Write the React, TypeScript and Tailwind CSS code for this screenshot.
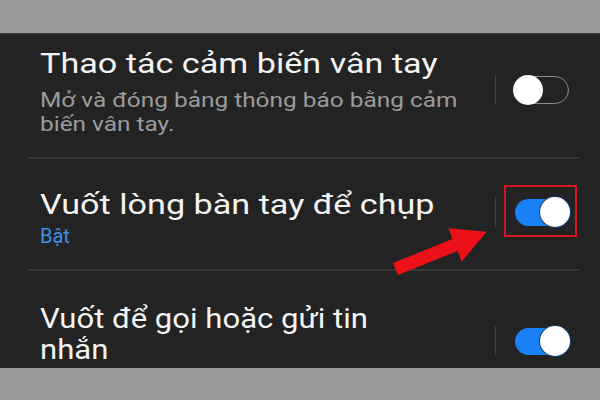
import React from 'react'

type Row = {
  title: React.ReactNode
  titleClass: string
  sub?: React.ReactNode
  subClass?: string
  on: boolean
  textPad: string
  toggleTop: string
}

function Toggle({ on }: { on: boolean }) {
  if (on) {
    return (
      <div className="relative h-[30px] w-[57px]">
        <div className="absolute left-[2px] top-[2px] h-[27px] w-[53px] rounded-full bg-[#1a80f5]" />
        <div className="absolute right-0 top-0 h-[30px] w-[30px] rounded-full bg-white ring-1 ring-[#15427a]" />
      </div>
    )
  }
  return (
    <div className="relative h-[30px] w-[57px]">
      <div className="absolute left-[2px] top-[1px] h-[28px] w-[54px] rounded-full border-[1.5px] border-[#8c8c8c]" />
      <div className="absolute left-0 top-0 h-[30px] w-[30px] rounded-full bg-white" />
    </div>
  )
}

function SettingRow({ row, last }: { row: Row; last?: boolean }) {
  return (
    <div className={last ? 'flex items-start' : 'flex items-start border-b-2 border-[#363636]'}>
      <div className={`min-w-0 flex-1 pl-[12px] ${row.textPad}`}>
        <div className={`origin-left whitespace-nowrap text-[28px] text-[#f4f4f4] ${row.titleClass}`}>{row.title}</div>
        {row.sub && <div className={`origin-left whitespace-nowrap ${row.subClass}`}>{row.sub}</div>}
      </div>
      <div className={`flex items-center ${row.toggleTop} mr-[9px]`}>
        <div className="h-[30px] w-px bg-[#3f3f3f]" />
        <div className="ml-[17px]">
          <Toggle on={row.on} />
        </div>
      </div>
    </div>
  )
}

const rows: Row[] = [
  {
    title: 'Thao tác cảm biến vân tay',
    titleClass: 'leading-[32px] scale-x-[1.22]',
    sub: (
      <>
        Mở và đóng bảng thông báo bằng cảm
        <br />
        biến vân tay.
      </>
    ),
    subClass: 'mt-[8px] text-[20px] leading-[24px] text-[#9c9c9c] scale-x-[1.22]',
    on: false,
    textPad: 'pt-[14px] pb-[21px]',
    toggleTop: 'mt-[41px]',
  },
  {
    title: 'Vuốt lòng bàn tay để chụp',
    titleClass: 'leading-[32px] scale-x-[1.22]',
    sub: 'Bật',
    subClass: 'mt-[3px] text-[20px] leading-[24px] text-[#3f8fe8]',
    on: true,
    textPad: 'pt-[30px] pb-[21px]',
    toggleTop: 'mt-[38px]',
  },
  {
    title: (
      <>
        Vuốt để gọi hoặc gửi tin
        <br />
        nhắn
      </>
    ),
    titleClass: 'leading-[31px] scale-x-[1.11]',
    on: true,
    textPad: 'pt-[32px]',
    toggleTop: 'mt-[55px]',
  },
]

export default function App() {
  return (
    <div className="relative flex h-[400px] w-[600px] flex-col overflow-hidden bg-[#999999] font-['Roboto','Noto_Sans',sans-serif]">
      <div className="h-[33px] shrink-0" />
      <div className="h-[335px] shrink-0 overflow-hidden border-t border-[#3a3a3a] bg-[#232323]">
        <div className="ml-[28px] mr-[21px]">
          {rows.map((r, i) => (
            <SettingRow key={i} row={r} last={i === rows.length - 1} />
          ))}
        </div>
      </div>

      {/* annotation: red box + arrow */}
      <div className="absolute left-[504px] top-[185px] h-[52px] w-[73px] border-2 border-[#d3161f]" />
      <svg className="pointer-events-none absolute left-0 top-0" width="600" height="400" viewBox="0 0 600 400">
        <polygon
          points="393,263 452.5,239 448.3,228.3 486.7,231.7 461.7,261.7 457.5,251 398,275"
          fill="#ec1118"
        />
      </svg>
    </div>
  )
}
